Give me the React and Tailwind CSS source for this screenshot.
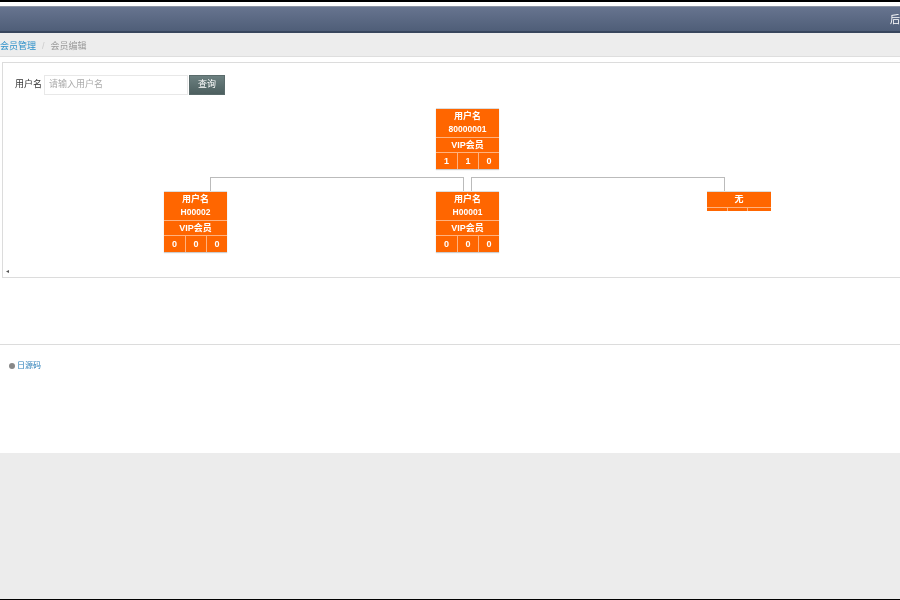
const F = "font-['Liberation_Sans','Noto_Sans_CJK_SC',sans-serif]";

function TreeNode({ name, id, counts, className }) {
  return (
    <div className={`absolute w-[63px] bg-[#ff6600] text-white font-bold text-[9px] text-center border-t border-[#ddd] shadow-[0_1px_1px_#ccc] ${className}`}>
      <div className="pt-[1px] h-[28px]">
        <div className="leading-[13px]">{name}</div>
        <div className="leading-[13px] text-[8.5px]">{id}</div>
      </div>
      <div className="h-[15px] leading-[14px] border-t border-[#ffb27f]">VIP会员</div>
      <div className="grid grid-cols-3 h-[17px] leading-[16px] border-t border-[#ffb27f]">
        {counts.map((c, i) => (
          <div key={i} className={i > 0 ? "border-l border-[#ffb27f]" : ""}>{c}</div>
        ))}
      </div>
    </div>
  );
}

export default function App() {
  return (
    <div className={`${F} w-[900px] h-[600px] overflow-hidden flex flex-col bg-[#ececec] text-[9px] blur-[0.35px]`}>
      <div className="h-[2px] bg-black shrink-0" />
      <div className="h-[4px] bg-white shrink-0" />
      <div className="h-[27px] shrink-0 flex items-center justify-end overflow-hidden border-t border-[#8b93a3] border-b-2 border-b-[#38465d] bg-gradient-to-b from-[#67748f] to-[#4f5e78] text-white text-[10px]">
        <span className="w-[10px] whitespace-nowrap overflow-hidden">后台</span>
      </div>
      <div className="h-[24px] shrink-0 bg-[#ededed] border-b border-[#dedede] flex items-center pt-[4px] text-[#999]">
        <span className="text-[#2b8fc9]">会员管理</span>
        <span className="mx-[6px] text-[#ccc]">/</span>
        <span>会员编辑</span>
      </div>
      <div className="bg-white shrink-0 h-[396px] flex flex-col">
        <div className="h-[5px]" />
        <div className="relative h-[216px] ml-[2px] border border-r-0 border-[#dcdcdc]">
          <div className="flex items-center pl-[12px] pt-[12px]">
            <span className="text-[#333] mr-[2px]">用户名</span>
            <div className="w-[144px] h-[20px] border border-[#e8e8e8] flex items-center pl-[4px] text-[#aaa]">请输入用户名</div>
            <button className="ml-[1px] w-[36px] h-[20px] bg-gradient-to-b from-[#6c8080] to-[#4c5f5f] text-white text-[9px] border border-[#5a6b6b]">查询</button>
          </div>
          <TreeNode name="用户名" id="80000001" counts={[1, 1, 0]} className="left-[433px] top-[45px]" />
          <div className="absolute left-[207px] top-[114px] w-[254px] h-[15px] border-t border-l border-[#bbb]" />
          <div className="absolute left-[460px] top-[114px] w-0 h-[15px] border-r border-[#bbb]" />
          <div className="absolute left-[468px] top-[114px] w-[254px] h-[15px] border-t border-l border-[#bbb]" />
          <div className="absolute left-[721px] top-[114px] w-px h-[15px] bg-[#bbb]" />
          <TreeNode name="用户名" id="H00002" counts={[0, 0, 0]} className="left-[161px] top-[128px]" />
          <TreeNode name="用户名" id="H00001" counts={[0, 0, 0]} className="left-[433px] top-[128px]" />
          <div className="absolute left-[704px] top-[128px] w-16 h-[20px] bg-[#ff6600] border-t border-[#ddd] text-white font-bold text-center leading-[15px]">
            无
            <div className="absolute left-0 right-0 top-[15px] h-px bg-[#ffb27f]" />
            <div className="absolute left-[20px] top-[15px] w-px h-[4px] bg-[#ffb27f]" />
            <div className="absolute left-[40px] top-[15px] w-px h-[4px] bg-[#ffb27f]" />
          </div>
          <span className="absolute left-[3px] top-[204px] text-[6px] leading-[8px] text-[#555]">◂</span>
        </div>
        <div className="h-[66px] shrink-0" />
        <div className="border-t border-[#dcdcdc] pl-[9px] pt-[15px] flex items-center text-[8px] text-[#2b7fb8]">
          <span className="w-[6px] h-[6px] rounded-full bg-[#888] mr-[2px]" />
          <span>日源码</span>
        </div>
      </div>
      <div className="flex-1" />
      <div className="h-px bg-black shrink-0" />
    </div>
  );
}
